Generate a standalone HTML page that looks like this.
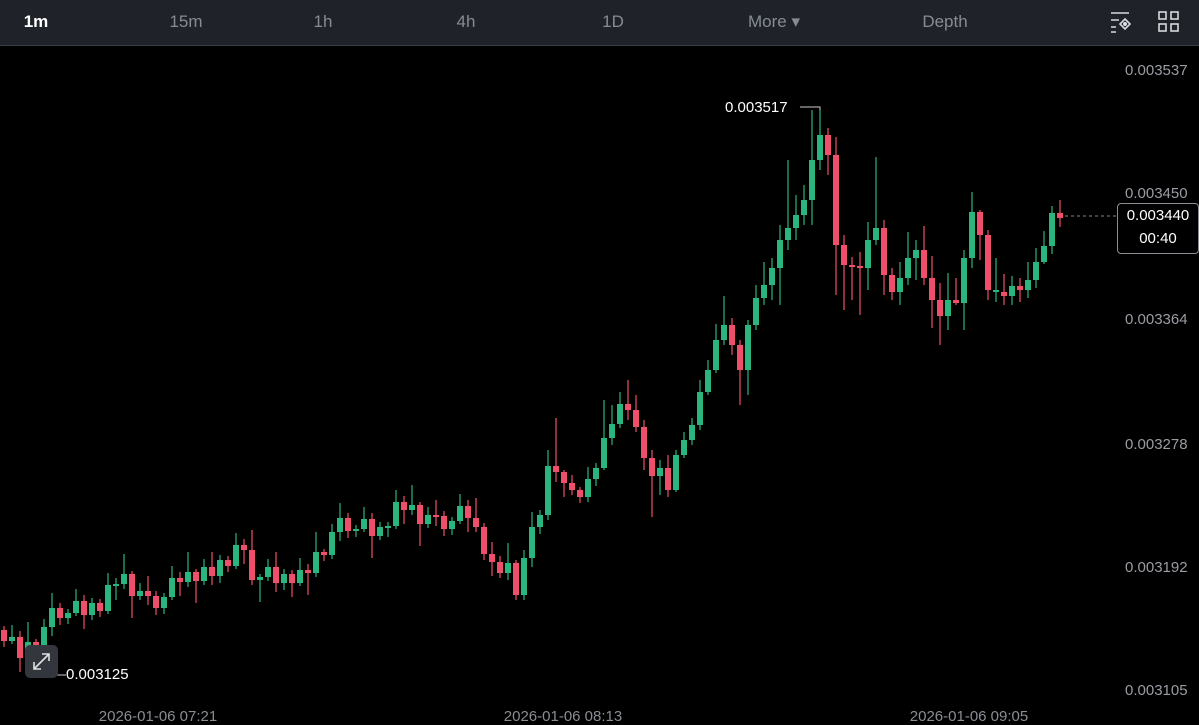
<!DOCTYPE html>
<html><head><meta charset="utf-8"><style>
body{margin:0;width:1199px;height:725px;background:#000;overflow:hidden;font-family:"Liberation Sans",sans-serif;position:relative}
.top{position:absolute;left:0;top:0;width:1199px;height:45px;background:#1f2229;border-bottom:1px solid #3a3e46}
.t{position:absolute;top:12px;font-size:17px;color:#868b94;transform:translateX(-50%)}
.ax{position:absolute;left:1125px;font-size:15px;color:#9a9da3}
.bt{position:absolute;top:708px;font-size:15px;color:#8a8d93;transform:translateX(-50%)}
</style></head><body>
<div class="top">
<span class="t" style="left:36px;color:#fff;font-weight:bold">1m</span>
<span class="t" style="left:186px">15m</span>
<span class="t" style="left:323px">1h</span>
<span class="t" style="left:466px">4h</span>
<span class="t" style="left:613px">1D</span>
<span class="t" style="left:774px">More ▾</span>
<span class="t" style="left:945px">Depth</span>
<svg style="position:absolute;left:1108px;top:11px" width="26" height="24" fill="none" stroke="#d8dadd" stroke-width="1.6"><path d="M3 2h18M3 9h8M3 16h5M3 21h5"/><path d="M17 8l5 5-5 5-5-5z"/><circle cx="17" cy="13" r="1.3" fill="#d8dadd"/></svg>
<svg style="position:absolute;left:1158px;top:11px" width="22" height="22" fill="none" stroke="#d8dadd" stroke-width="1.6"><rect x="1" y="1" width="7" height="7"/><rect x="13" y="1" width="7" height="7"/><rect x="1" y="13" width="7" height="7"/><rect x="13" y="13" width="7" height="7"/></svg>
</div>
<svg style="position:absolute;left:0;top:0" width="1199" height="725">
<path d="M66 675H40V660" stroke="#ccc" fill="none"/><path d="M800 107H820V120" stroke="#ccc" fill="none"/><path d="M1065 216H1117" stroke="#888" stroke-dasharray="3,3"/>
<g stroke="#2bb57e" stroke-width="1.2" fill="none">
<path d="M12 625V644M28 622V663M44 619V652M52 593V636M68 609V624M76 589V616M92 598V620M108 573V614M116 578V600M124 554V589M140 583V600M164 593V614M172 566V600M188 552V587M204 559V585M220 555V583M236 533V569M260 574V602M268 559V581M284 569V590M300 558V586M316 532V577M332 524V559M340 503V541M356 525V537M364 507V532M380 522V540M388 522V537M396 490V529M412 485V515M428 507V528M452 517V535M460 494V524M508 543V580M524 550V600M532 512V567M540 510V534M548 450V520M588 467V502M596 463V486M604 400V470M612 405V445M620 392V428M660 460V495M676 450V492M684 432V458M692 418V445M700 380V430M708 360V395M716 324V373M724 296V345M748 320V395M756 285V330M764 262V305M772 258V300M780 225V305M788 160V250M796 195V240M804 185V225M812 110V225M820 110V170M868 222V290M876 157V245M900 262V305M908 232V285M916 240V280M948 273V330M964 250V330M972 192V268M996 258V302M1012 276V305M1028 262V298M1036 248V288M1044 231V264M1052 206V254"/>
</g>
<g fill="#2bb57e">
<rect x="9" y="637" width="6" height="4"/><rect x="25" y="642" width="6" height="16"/><rect x="41" y="627" width="6" height="21"/><rect x="49" y="608" width="6" height="19"/><rect x="65" y="613" width="6" height="5"/><rect x="73" y="601" width="6" height="12"/><rect x="89" y="603" width="6" height="12"/><rect x="105" y="585" width="6" height="26"/><rect x="113" y="584" width="6" height="2"/><rect x="121" y="574" width="6" height="10"/><rect x="137" y="591" width="6" height="5"/><rect x="161" y="597" width="6" height="11"/><rect x="169" y="578" width="6" height="19"/><rect x="185" y="572" width="6" height="10"/><rect x="201" y="567" width="6" height="14"/><rect x="217" y="560" width="6" height="16"/><rect x="233" y="545" width="6" height="21"/><rect x="257" y="577" width="6" height="3"/><rect x="265" y="567" width="6" height="10"/><rect x="281" y="574" width="6" height="9"/><rect x="297" y="570" width="6" height="13"/><rect x="313" y="552" width="6" height="21"/><rect x="329" y="532" width="6" height="23"/><rect x="337" y="518" width="6" height="14"/><rect x="353" y="529" width="6" height="2"/><rect x="361" y="519" width="6" height="10"/><rect x="377" y="527" width="6" height="9"/><rect x="385" y="526" width="6" height="2"/><rect x="393" y="502" width="6" height="24"/><rect x="409" y="505" width="6" height="5"/><rect x="425" y="515" width="6" height="9"/><rect x="449" y="521" width="6" height="8"/><rect x="457" y="506" width="6" height="15"/><rect x="505" y="563" width="6" height="10"/><rect x="521" y="558" width="6" height="37"/><rect x="529" y="527" width="6" height="31"/><rect x="537" y="515" width="6" height="12"/><rect x="545" y="466" width="6" height="49"/><rect x="585" y="479" width="6" height="18"/><rect x="593" y="468" width="6" height="11"/><rect x="601" y="438" width="6" height="30"/><rect x="609" y="424" width="6" height="14"/><rect x="617" y="404" width="6" height="20"/><rect x="657" y="468" width="6" height="8"/><rect x="673" y="455" width="6" height="35"/><rect x="681" y="440" width="6" height="15"/><rect x="689" y="425" width="6" height="15"/><rect x="697" y="392" width="6" height="33"/><rect x="705" y="370" width="6" height="22"/><rect x="713" y="340" width="6" height="30"/><rect x="721" y="325" width="6" height="15"/><rect x="745" y="325" width="6" height="45"/><rect x="753" y="298" width="6" height="27"/><rect x="761" y="285" width="6" height="13"/><rect x="769" y="268" width="6" height="17"/><rect x="777" y="240" width="6" height="28"/><rect x="785" y="228" width="6" height="12"/><rect x="793" y="215" width="6" height="13"/><rect x="801" y="200" width="6" height="15"/><rect x="809" y="160" width="6" height="40"/><rect x="817" y="135" width="6" height="25"/><rect x="865" y="240" width="6" height="28"/><rect x="873" y="228" width="6" height="12"/><rect x="897" y="278" width="6" height="14"/><rect x="905" y="258" width="6" height="20"/><rect x="913" y="250" width="6" height="8"/><rect x="945" y="300" width="6" height="16"/><rect x="961" y="258" width="6" height="45"/><rect x="969" y="212" width="6" height="46"/><rect x="993" y="290" width="6" height="2"/><rect x="1009" y="286" width="6" height="10"/><rect x="1025" y="280" width="6" height="10"/><rect x="1033" y="262" width="6" height="18"/><rect x="1041" y="246" width="6" height="16"/><rect x="1049" y="213" width="6" height="33"/>
</g>
<g stroke="#ee4f69" stroke-width="1.2" fill="none">
<path d="M4 626V647M20 631V672M36 639V670M60 603V625M84 595V629M100 599V617M132 571V618M148 576V605M156 591V615M180 572V596M196 569V603M212 552V585M228 556V572M244 539V564M252 530V585M276 552V592M292 570V597M308 564V595M324 549V561M348 513V538M372 513V558M404 496V524M420 502V546M436 500V526M444 511V536M468 500V532M476 498V532M484 523V560M492 542V576M500 556V578M516 560V600M556 418V482M564 470V497M572 475V495M580 487V503M628 380V420M636 395V432M644 420V470M652 450V517M668 455V497M732 318V355M740 340V405M828 128V175M836 137V295M844 235V310M852 257V300M860 252V315M884 220V295M892 268V300M924 226V285M932 256V328M940 283V345M956 278V305M980 210V260M988 230V300M1004 274V305M1020 278V302M1060 200V227"/>
</g>
<g fill="#ee4f69">
<rect x="1" y="630" width="6" height="11"/><rect x="17" y="637" width="6" height="21"/><rect x="33" y="642" width="6" height="6"/><rect x="57" y="608" width="6" height="10"/><rect x="81" y="601" width="6" height="14"/><rect x="97" y="603" width="6" height="8"/><rect x="129" y="574" width="6" height="22"/><rect x="145" y="591" width="6" height="5"/><rect x="153" y="596" width="6" height="12"/><rect x="177" y="578" width="6" height="4"/><rect x="193" y="572" width="6" height="9"/><rect x="209" y="567" width="6" height="9"/><rect x="225" y="560" width="6" height="6"/><rect x="241" y="545" width="6" height="5"/><rect x="249" y="550" width="6" height="30"/><rect x="273" y="567" width="6" height="16"/><rect x="289" y="574" width="6" height="9"/><rect x="305" y="570" width="6" height="3"/><rect x="321" y="552" width="6" height="3"/><rect x="345" y="518" width="6" height="13"/><rect x="369" y="519" width="6" height="17"/><rect x="401" y="502" width="6" height="8"/><rect x="417" y="505" width="6" height="19"/><rect x="433" y="515" width="6" height="2"/><rect x="441" y="516" width="6" height="13"/><rect x="465" y="506" width="6" height="12"/><rect x="473" y="518" width="6" height="9"/><rect x="481" y="527" width="6" height="27"/><rect x="489" y="554" width="6" height="8"/><rect x="497" y="562" width="6" height="11"/><rect x="513" y="563" width="6" height="32"/><rect x="553" y="466" width="6" height="6"/><rect x="561" y="472" width="6" height="11"/><rect x="569" y="483" width="6" height="7"/><rect x="577" y="490" width="6" height="7"/><rect x="625" y="404" width="6" height="6"/><rect x="633" y="410" width="6" height="17"/><rect x="641" y="427" width="6" height="31"/><rect x="649" y="458" width="6" height="18"/><rect x="665" y="468" width="6" height="22"/><rect x="729" y="325" width="6" height="20"/><rect x="737" y="345" width="6" height="25"/><rect x="825" y="135" width="6" height="20"/><rect x="833" y="155" width="6" height="90"/><rect x="841" y="245" width="6" height="20"/><rect x="849" y="265" width="6" height="2"/><rect x="857" y="266" width="6" height="2"/><rect x="881" y="228" width="6" height="47"/><rect x="889" y="275" width="6" height="17"/><rect x="921" y="250" width="6" height="28"/><rect x="929" y="278" width="6" height="22"/><rect x="937" y="300" width="6" height="16"/><rect x="953" y="300" width="6" height="3"/><rect x="977" y="212" width="6" height="23"/><rect x="985" y="235" width="6" height="55"/><rect x="1001" y="292" width="6" height="4"/><rect x="1017" y="286" width="6" height="4"/><rect x="1057" y="213" width="6" height="5"/>
</g>
</svg>
<span class="ax" style="top:62px">0.003537</span>
<span class="ax" style="top:185px">0.003450</span>
<span class="ax" style="top:311px">0.003364</span>
<span class="ax" style="top:436px">0.003278</span>
<span class="ax" style="top:559px">0.003192</span>
<span class="ax" style="top:682px">0.003105</span>
<div style="position:absolute;left:1117px;top:203px;width:80px;height:49px;border:1px solid #8a8d93;border-radius:4px;background:#000;color:#fff;font-size:15px;text-align:center;line-height:23px">0.003440<br>00:40</div>
<span style="position:absolute;left:725px;top:99px;color:#fff;font-size:15px">0.003517</span>
<span style="position:absolute;left:66px;top:666px;color:#fff;font-size:15px">0.003125</span>
<div style="position:absolute;left:25px;top:645px;width:33px;height:33px;background:#33363d;border-radius:5px"></div>
<svg style="position:absolute;left:25px;top:645px" width="33" height="33" fill="none" stroke="#e0e0e0" stroke-width="1.6"><path d="M9 24l15-15M17 9h7v7M9 17v7h7"/></svg>
<span class="bt" style="left:158px">2026-01-06 07:21</span>
<span class="bt" style="left:563px">2026-01-06 08:13</span>
<span class="bt" style="left:969px">2026-01-06 09:05</span>
</body></html>
